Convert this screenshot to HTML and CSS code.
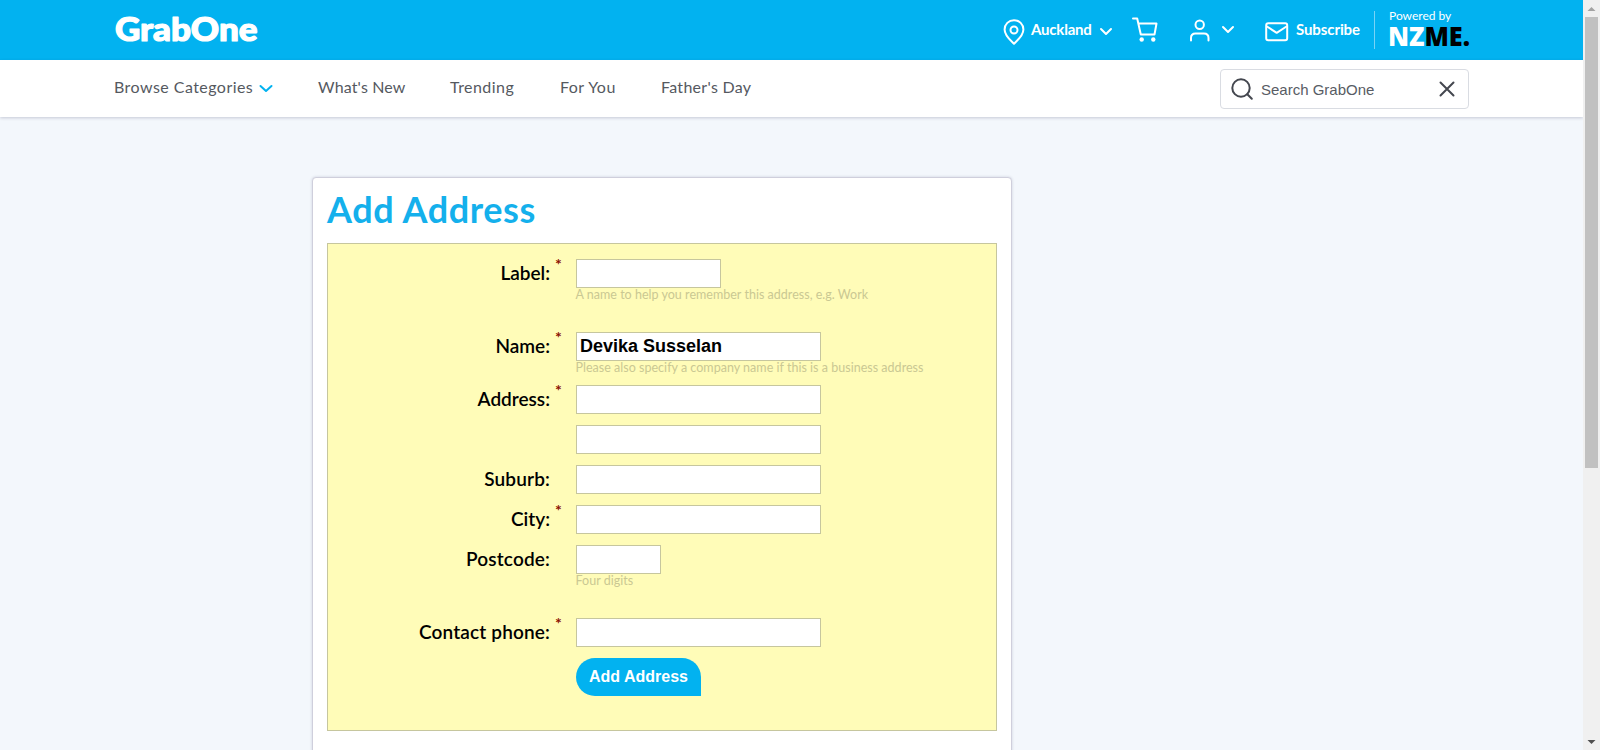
FILE: index.html
```html
<!DOCTYPE html>
<html lang="en">
<head>
<meta charset="utf-8">
<title>Add Address - GrabOne</title>
<link rel="stylesheet" href="styles.css">
</head>
<body>
<div class="page">
  <header class="topbar">
    <div class="wrap topbar-inner">
      <svg class="logo" width="148" height="46" viewBox="0 0 148 46"><text class="logo-text" x="1" y="34" textLength="142.500" lengthAdjust="spacingAndGlyphs">GrabOne</text></svg>
      <div class="tools">
        <div class="tool location">
          <svg class="pin" width="22" height="26" viewBox="0 0 22 26"><path d="M11 1.2c-5.300 0-9.400 4.100-9.400 9.300C1.600 17 8 21.500 11 24.700c3-3.200 9.400-7.700 9.400-14.200 0-5.200-4.100-9.300-9.400-9.300z"/><circle cx="11" cy="11" r="3.500"/></svg>
          <span class="tool-text auckland">Auckland</span>
          <svg class="chev chev-low" width="14" height="10" viewBox="0 0 14 10"><path d="M2 2l5 5 5-5"/></svg>
        </div>
        <svg class="cart" width="26" height="26" viewBox="0 0 26 26"><path d="M1 1.500h4.200l3.600 16h13.700l2-11H6.300"/><circle class="dot" cx="9.700" cy="22.500" r="2.200"/><circle class="dot" cx="21.300" cy="22.500" r="2.200"/></svg>
        <div class="tool account">
          <svg width="22" height="24" viewBox="0 0 22 24"><circle cx="10.700" cy="6.700" r="4.200"/><path d="M2 22.500v-2.500c0-3 2-4.500 4.500-4.500h8.500c2.500 0 4.500 1.500 4.500 4.500v2.500"/></svg>
          <svg class="chev" width="14" height="10" viewBox="0 0 14 10"><path d="M2 2l5 5 5-5"/></svg>
        </div>
        <div class="tool subscribe">
          <svg class="mail" width="24" height="20" viewBox="0 0 24 20"><rect x="1.200" y="1.200" width="21" height="17" rx="2"/><path d="M2 4.500l9.700 6.300L21.500 4.500"/></svg>
          <span class="tool-text sub">Subscribe</span>
        </div>
        <div class="powered">
          <span class="powered-text">Powered by</span>
          <svg class="nzme" width="82" height="28" viewBox="0 0 82 28"><text x="-1" y="23" textLength="82" lengthAdjust="spacingAndGlyphs"><tspan class="nz">NZ</tspan><tspan class="me">ME.</tspan></text></svg>
        </div>
      </div>
    </div>
  </header>
  <nav class="nav">
    <div class="wrap nav-inner">
      <a class="link browse">Browse Categories</a>
      <svg class="chev chev-blue" width="14" height="10" viewBox="0 0 14 10"><path d="M1.500 2l5.500 5 5.500-5"/></svg>
      <a class="link new">What's New</a>
      <a class="link trending">Trending</a>
      <a class="link foryou">For You</a>
      <a class="link father">Father's Day</a>
      <div class="search">
        <svg width="24" height="24" viewBox="0 0 24 24"><circle cx="11" cy="11" r="8.700"/><path d="M17.300 17.300l4.500 4.500"/></svg>
        <span class="search-text">Search GrabOne</span>
        <svg width="18" height="18" viewBox="0 0 18 18"><path d="M2.500 2.500l13 13M15.500 2.500l-13 13"/></svg>
      </div>
    </div>
  </nav>
  <main class="card">
    <h1 class="title">Add Address</h1>
    <form class="form">
      <div class="row tall"><label class="label">Label:</label><span class="req">*</span><div class="field"><div class="box w-mid"></div><div class="hint">A name to help you remember this address, e.g. Work</div></div></div>
      <div class="row medium"><label class="label">Name:</label><span class="req">*</span><div class="field"><div class="box">Devika Susselan</div><div class="hint">Please also specify a company name if this is a business address</div></div></div>
      <div class="row"><label class="label">Address:</label><span class="req">*</span><div class="field"><div class="box"></div></div></div>
      <div class="row"><span class="label"></span><span class="req"></span><div class="field"><div class="box"></div></div></div>
      <div class="row"><label class="label wide">Suburb:</label><span class="req"></span><div class="field"><div class="box"></div></div></div>
      <div class="row"><label class="label">City:</label><span class="req">*</span><div class="field"><div class="box"></div></div></div>
      <div class="row tall"><label class="label wide">Postcode:</label><span class="req"></span><div class="field"><div class="box w-small"></div><div class="hint">Four digits</div></div></div>
      <div class="row"><label class="label wide">Contact phone:</label><span class="req">*</span><div class="field"><div class="box"></div></div></div>
      <div class="row"><span class="label"></span><span class="req"></span><button class="button" type="button">Add Address</button></div>
    </form>
  </main>
</div>
<div class="scrollbar">
  <svg width="17" height="17" viewBox="0 0 17 17"><path class="arrow-up" d="M4.500 11h8L8.500 7z"/></svg>
  <div class="thumb"></div>
  <svg class="down" width="17" height="17" viewBox="0 0 17 17"><path class="arrow-down" d="M4.500 7h8l-4 4z"/></svg>
</div>
</body>
</html>
```
FILE: styles.css
```css
* { box-sizing: border-box; }
body {
  margin: 0;
  display: flex;
  height: 750px;
  overflow: hidden;
  background: #f3f7fc;
  font-family: Lato, "Open Sans", sans-serif;
}
svg { display: block; flex: none; fill: none; stroke-linecap: round; stroke-linejoin: round; }
.page { width: 1583px; flex: none; height: 750px; overflow: hidden; }
.wrap { width: 1355px; margin: 0 auto; display: flex; }
.topbar { height: 60px; background: #02b2f0; color: #fff; }
.topbar-inner { justify-content: space-between; height: 60px; }
.logo { margin-top: 7px; }
.logo-text { font: 900 32px Lato, sans-serif; fill: #fff; stroke: #fff; stroke-width: 1.2px; }
.tools { display: flex; flex: none; stroke: #fff; stroke-width: 2; width: 466px; }
.tools > * { flex: none; }
.tool { display: flex; }
.tool-text { font-weight: 700; font-size: 15px; line-height: 18px; margin-top: 20px; white-space: nowrap; }
.location { width: 128px; }
.pin { margin-top: 19px; }
.auckland { width: 60px; margin-left: 6px; letter-spacing: -0.2px; }
.chev { margin-top: 25px; }
.chev-low { margin-top: 27px; margin-left: 8px; }
.cart { margin: 17px 0 0 1px; }
.dot { fill: #fff; stroke: none; }
.account { margin: 18px 0 0 31px; height: 30px; }
.account .chev { margin: 7px 0 0 10px; }
.subscribe { margin-left: 30px; }
.mail { margin-top: 22px; }
.sub { margin-left: 7px; width: 63px; letter-spacing: -0.1px; }
.powered { margin: 11px 0 0 15px; height: 38px; border-left: 1px solid #79d3f6; padding-left: 14px; }
.powered-text { display: block; margin-top: -3px; font-size: 12px; line-height: 16px; white-space: nowrap; }
.nzme text { font: 800 27px "Open Sans", sans-serif; stroke: none; }
.nzme { margin-top: -1px; }
.nz { fill: #fff; }
.me { fill: #000; }
.nav { height: 57px; background: #fff; box-shadow: 0 1px 3px rgba(40, 40, 80, 0.22); }
.nav-inner { height: 57px; }
.link { margin: 17px 0 0; font-size: 16px; line-height: 20px; color: #55595f; white-space: nowrap; letter-spacing: 0.45px; }
.browse { width: 139px; }
.new { margin-left: 45px; width: 87px; letter-spacing: 0.15px; }
.trending { margin-left: 45px; width: 65px; }
.foryou { margin-left: 45px; width: 56px; }
.father { margin-left: 45px; letter-spacing: 0.3px; }
.chev-blue { margin: 24px 0 0 6px; stroke: #02b2f0; stroke-width: 2; }
.search {
  display: flex;
  align-items: center;
  width: 249px;
  height: 40px;
  margin: 9px 0 0 auto;
  padding: 0 12px 0 9px;
  border: 1px solid #d9dce2;
  border-radius: 4px;
  stroke: #44474f;
  stroke-width: 2;
}
.search-text { flex: 1; margin-left: 7px; font: 15px "Liberation Sans", Arial, sans-serif; color: #585c64; }
.card {
  width: 700px;
  height: 640px;
  margin: 60px 0 0 312px;
  padding: 0 14px;
  border: 1px solid #cfcfdc;
  border-radius: 4px;
  background: #fff;
  box-shadow: 0 0 3px rgba(60, 60, 100, 0.2);
}
.title { margin: 10px 0 12px; font-size: 36px; font-weight: 700; line-height: 43px; color: #14b0ec; white-space: nowrap; letter-spacing: 0.6px; }
.form { height: 488px; padding-top: 15px; border: 1px solid #c6c69e; background: #fffcb8; }
.row { display: grid; grid-template-columns: 222px 26px 1fr; height: 40px; align-items: start; }
.row.medium { height: 53px; }
.row.tall { height: 73px; }
.label { text-align: right; font-size: 19px; font-weight: 600; line-height: 27px; color: #000; white-space: nowrap; }
.wide { letter-spacing: 0.15px; }
.req { margin-top: -4px; padding-left: 5px; font-size: 16px; font-weight: 700; line-height: 18px; color: #8b0f00; }
.box {
  width: 245px;
  height: 29px;
  padding: 0 3px;
  border: 1px solid #c6c69e;
  background: #fff;
  font: bold 18px/27px "Liberation Sans", Arial, sans-serif;
  white-space: nowrap;
}
.w-mid { width: 145px; }
.w-small { width: 85px; }
.hint { margin-left: -0.5px; font-size: 12.5px; line-height: 14px; color: #cac893; white-space: nowrap; letter-spacing: 0.02px; }
.button {
  width: 125px;
  height: 38px;
  padding: 0;
  border: 0;
  border-radius: 19px 19px 0 19px;
  background: #02b2f0;
  color: #fff;
  font: bold 16px "Liberation Sans", Arial, sans-serif;
}
.scrollbar { display: flex; flex-direction: column; width: 17px; height: 750px; background: #f0f0f0; }
.thumb { width: 13px; height: 451px; margin-left: 2px; background: #c1c1c1; }
.down { margin-top: auto; }
.arrow-up { fill: #a3a3a3; }
.arrow-down { fill: #505050; }
```
